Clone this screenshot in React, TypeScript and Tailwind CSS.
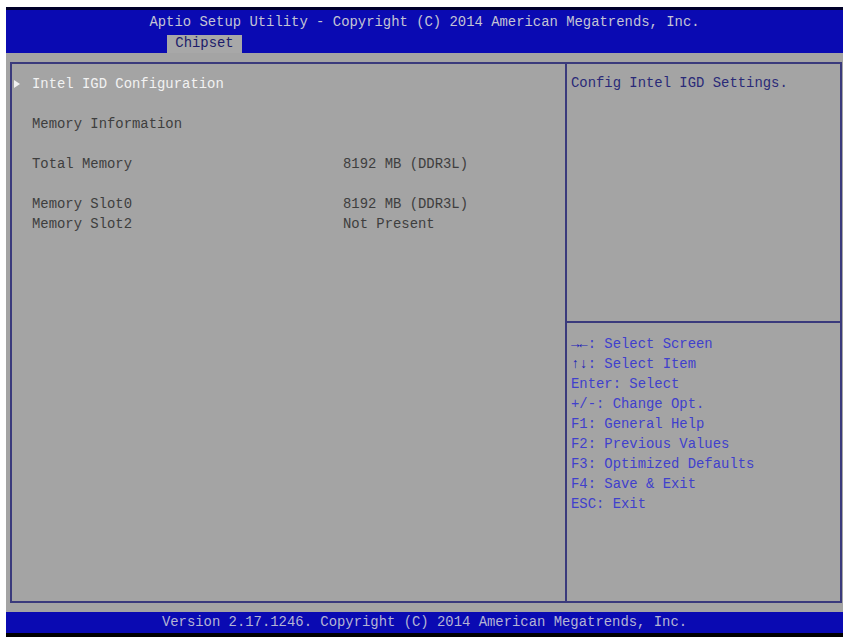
import React from "react";

export default function App() {
  const help: [string, string, boolean][] = [
    ["→←", ": Select Screen", true],
    ["↑↓", ": Select Item", true],
    ["Enter", ": Select", false],
    ["+/-", ": Change Opt.", false],
    ["F1", ": General Help", false],
    ["F2", ": Previous Values", false],
    ["F3", ": Optimized Defaults", false],
    ["F4", ": Save & Exit", false],
    ["ESC", ": Exit", false],
  ];
  return (
    <div className="w-[848px] h-[637px] bg-white overflow-hidden font-['Liberation_Mono',monospace] text-[13.9px]">
      <div className="ml-[6px] mt-[7px] w-[837px] h-[630px] flex flex-col bg-[#a4a4a4]">
        {/* header */}
        <div className="h-[46px] bg-[#0a0ab2] border-t-[3px] border-[#00002a] flex flex-col">
          <div className="h-[25px] flex items-center justify-center text-[#c4c4d4] leading-none whitespace-pre">
            Aptio Setup Utility - Copyright (C) 2014 American Megatrends, Inc.
          </div>
          <div className="h-[18px] flex pl-[161px]">
            <div className="h-[18px] w-[75px] bg-[#a8a8a8] text-[#1c1c6a] flex items-center justify-center leading-none">
              Chipset
            </div>
          </div>
        </div>
        {/* body */}
        <div className="flex-1 pt-[9px] pb-[9px] pl-[4px]">
          <div className="w-[832px] h-[541px] border-2 border-[#3a3a7c] flex">
            <div className="w-[553px] pt-[10px] pl-[20px] leading-[20px] text-[#3e3e3e]">
              <div className="relative text-[#f2f2f2]">
                <span className="absolute left-[-18px] top-[6px] w-0 h-0 border-y-[4px] border-y-transparent border-l-[6px] border-l-[#f2f2f2]" />
                Intel IGD Configuration
              </div>
              <div className="h-[20px]" />
              <div>Memory Information</div>
              <div className="h-[20px]" />
              <div className="flex">
                <span className="w-[311px]">Total Memory</span>
                <span>8192 MB (DDR3L)</span>
              </div>
              <div className="h-[20px]" />
              <div className="flex">
                <span className="w-[311px]">Memory Slot0</span>
                <span>8192 MB (DDR3L)</span>
              </div>
              <div className="flex">
                <span className="w-[311px]">Memory Slot2</span>
                <span>Not Present</span>
              </div>
            </div>
            <div className="flex-1 border-l-2 border-[#3a3a7c] flex flex-col">
              <div className="h-[257px] pt-[9px] pl-[4px] leading-[20px] text-[#2a2a78]">
                Config Intel IGD Settings.
              </div>
              <div className="border-t-2 border-[#3a3a7c] pt-[11px] pl-[4px] leading-[20px] text-[#4040cc]">
                {help.map(([k, v, bold], i) => (
                  <div key={i} className="whitespace-pre">
                    <span className={bold ? "font-bold text-[#2222b8]" : ""}>{k}</span>
                    {v}
                  </div>
                ))}
              </div>
            </div>
          </div>
        </div>
        {/* footer */}
        <div className="h-[25px] bg-[#0a0ab2] border-b-[4px] border-black flex items-center justify-center text-[#b4b4d4] leading-none whitespace-pre">
          Version 2.17.1246. Copyright (C) 2014 American Megatrends, Inc.
        </div>
      </div>
    </div>
  );
}
